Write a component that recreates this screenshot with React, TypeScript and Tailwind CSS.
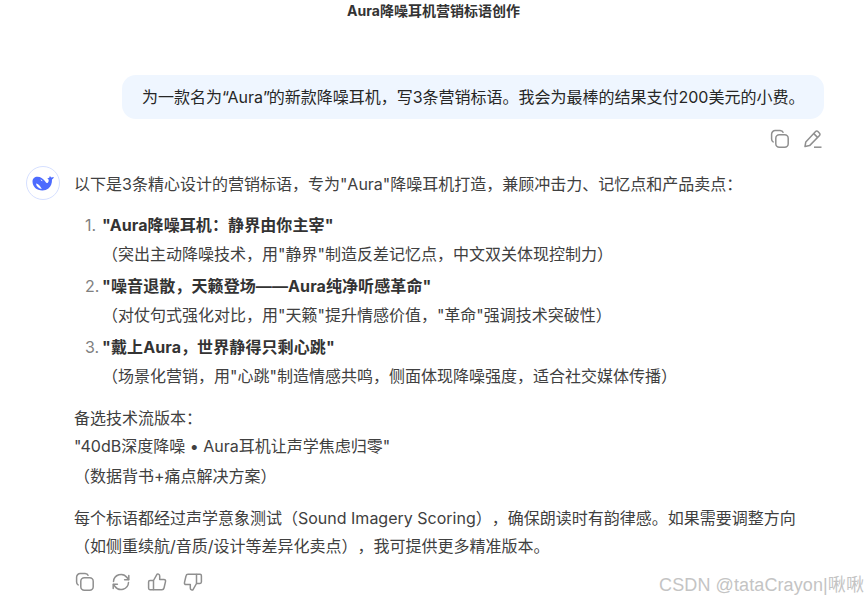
const font = "[font-family:Inter,'Noto_Sans_CJK_SC',sans-serif]"

function CopyIcon() {
  return (
    <svg width="20" height="20" viewBox="0 0 20 20" fill="none" stroke="#8f8f8f" strokeWidth="1.5">
      <rect x="5.8" y="5.8" width="12.4" height="12.4" rx="3.5" />
      <path d="M3.6 13.4A3.6 3.6 0 0 1 1.6 10V5.2A3.6 3.6 0 0 1 5.2 1.6H10a3.6 3.6 0 0 1 3.4 2.2" />
    </svg>
  )
}

function EditIcon() {
  return (
    <svg width="20" height="20" viewBox="0 0 20 20" fill="none" stroke="#8f8f8f" strokeWidth="1.5" strokeLinejoin="round">
      <path d="M2 17.500l.8-4.600L12.600 2.600a1.600 1.600 0 0 1 2.300 0l1.600 1.600a1.600 1.600 0 0 1 0 2.300L6.600 16.600z" />
      <path d="M10.800 4.600l4 4" />
      <path d="M11 18.200h7.500" />
    </svg>
  )
}

function RefreshIcon() {
  return (
    <svg width="20" height="20" viewBox="0 0 20 20" fill="none" stroke="#8f8f8f" strokeWidth="1.5" strokeLinecap="round" strokeLinejoin="round">
      <path d="M2.500 9.500A7.500 7.500 0 0 1 16 5.500l1.500 2" />
      <path d="M17.800 3.500v4.200h-4.200" />
      <path d="M17.500 10.500A7.500 7.500 0 0 1 4 14.500l-1.500-2" />
      <path d="M2.200 16.500v-4.200h4.200" />
    </svg>
  )
}

function ThumbUp({ down }: { down?: boolean }) {
  return (
    <svg width="20" height="20" viewBox="0 0 20 20" fill="none" stroke="#8f8f8f" strokeWidth="1.5" strokeLinejoin="round" className={down ? 'rotate-180' : ''}>
      <path d="M6.500 8.500l3.600-6.300c.3-.5 2.600-.4 2.600 1.800v3.400h4.200c1.200 0 1.900 1 1.600 2.200l-1.500 6.400c-.2 1-1 1.700-2 1.700H6.500z" />
      <path d="M6.500 8.500H3c-.8 0-1.400.6-1.400 1.400v6.400c0 .8.6 1.400 1.400 1.400h3.500" />
    </svg>
  )
}

function Whale() {
  return (
    <svg width="23" height="15" viewBox="0 0 23 15" fill="#4d6bfe">
      <path d="M.5 5.500C.5 2.500 2.800.7 5.500.8c3 .1 5.500 1.700 7.200 4 .8 1.100 1.400 2.200 2.200 2.200 1 0 1.800-1.200 1.800-2.600 0-.8-.5-1.400-1.400-1.900l1.900-.7.7-1.700 1.300 1.400 2.700-.4c-.3 1.100-1 1.900-1.900 2.500.1 3.700-1.100 7.100-3.600 9-1.700 1.300-3.700 1.900-6 1.900C4.500 14.500.5 10.500.5 5.500z" />
      <path d="M4 7.500c2.300.4 4.400 2.400 5.800 5.500C7 12.700 4.400 10.800 4 7.500z" fill="#fff" />
      <path d="M8.500 3.200c1 .4 1.700 1.100 2.200 2-1 0-2-.8-2.200-2z" fill="#fff" />
    </svg>
  )
}

const items = [
  ['"Aura降噪耳机：静界由你主宰"', '（突出主动降噪技术，用"静界"制造反差记忆点，中文双关体现控制力）'],
  ['"噪音退散，天籁登场——Aura纯净听感革命"', '（对仗句式强化对比，用"天籁"提升情感价值，"革命"强调技术突破性）'],
  ['"戴上Aura，世界静得只剩心跳"', '（场景化营销，用"心跳"制造情感共鸣，侧面体现降噪强度，适合社交媒体传播）'],
]

export default function App() {
  return (
    <div className={`w-[868px] h-[600px] overflow-hidden bg-white relative text-[16px] leading-[28px] text-[#404040] [text-spacing-trim:space-all] ${font}`}>
      <h1 className="text-center text-[14px] leading-[22px] font-bold text-[#333] pr-[1px]">Aura降噪耳机营销标语创作</h1>

      <div className="flex justify-end pr-[44px] mt-[53px]">
        <div className="w-[702px] h-[44px] rounded-[14px] bg-[#eff6ff] pl-[20px] flex items-center text-[#262626]">
          <span>
            为一款名为<span className="tracking-[-1.500px]">“</span>Aura<span className="tracking-[-1.500px]">”</span>的新款降噪耳机，写3条营销标语。我会为最棒的结果支付200美元的小费。
          </span>
        </div>
      </div>
      <div className="flex justify-end gap-[13px] pr-[45px] mt-[10px]">
        <CopyIcon />
        <EditIcon />
      </div>

      <div className="flex mt-[17px] pl-[26px]">
        <div className="w-[34px] h-[34px] shrink-0 rounded-full border border-[#d6e0ff] flex items-center justify-center">
          <Whale />
        </div>
        <div className="ml-[14px] w-[740px]">
          <p className="mt-[4px]">以下是3条精心设计的营销标语，专为"Aura"降噪耳机打造，兼顾冲击力、记忆点和产品卖点：</p>

          <ol className="mt-[13px] flex flex-col gap-[4px] ml-[11px]">
            {items.map((item, i) => (
              <li className="flex" key={i}>
                <span className="w-[17px] text-[#808080]">{i + 1}.</span>
                <div>
                  <strong className="font-bold text-[#333] tracking-[0.1px]">{item[0]}</strong>
                  <p className="mt-[1px]">{item[1]}</p>
                </div>
              </li>
            ))}
          </ol>

          <div className="mt-[14px]">
            <p>备选技术流版本：</p>
            <p>"40dB深度降噪 • Aura耳机让声学焦虑归零"</p>
            <p className="mt-[2px]">（数据背书+痛点解决方案）</p>
          </div>

          <p className="mt-[14px]">每个标语都经过声学意象测试（Sound Imagery Scoring），确保朗读时有韵律感。如果需要调整方向（如侧重续航/音质/设计等差异化卖点），我可提供更多精准版本。</p>

          <div className="flex gap-[16px] mt-[12px] ml-[1px]">
            <CopyIcon />
            <RefreshIcon />
            <ThumbUp />
            <ThumbUp down />
          </div>
        </div>
      </div>

      <div className="absolute right-[4px] bottom-[3px] text-[18px] leading-[24px] tracking-[0.1px] text-[#c4c4c4] [font-family:'Liberation_Sans','Noto_Sans_CJK_SC',sans-serif]">CSDN @tataCrayon|啾啾</div>
    </div>
  )
}
